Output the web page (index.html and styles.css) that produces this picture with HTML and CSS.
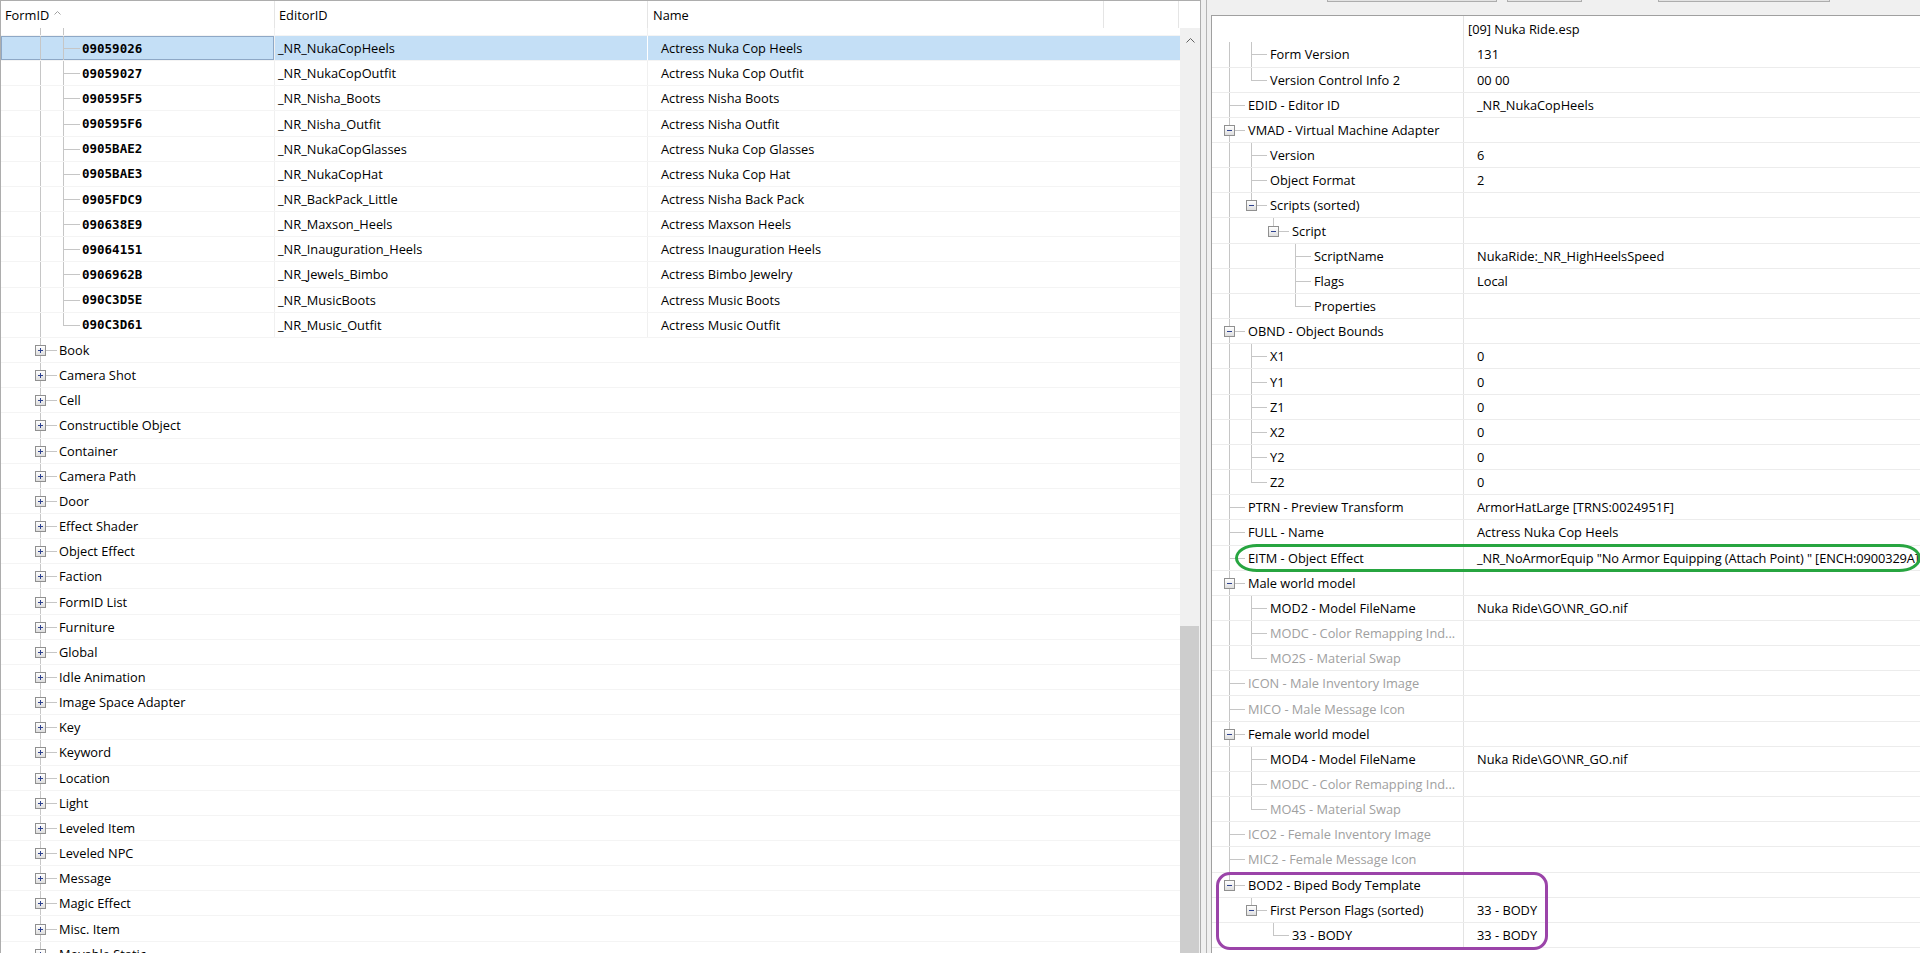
FILE: index.html
```html
<!DOCTYPE html>
<html lang="en">
<head>
  <meta charset="UTF-8" />
  <meta name="viewport" content="width=device-width, initial-scale=1" />
  <title>FO4Edit - Nuka Ride.esp</title>
  <link rel="stylesheet" href="styles.css">
</head>
<body>
<div class="app">

  <!-- record list (left) -->
  <section class="list">
    <div class="list-head">
      <div class="hc c-form">FormID
        <svg class="sort" width="7" height="4" viewBox="0 0 7 4"><polyline points="0.5,3.5 3.5,0.5 6.5,3.5" fill="none" stroke="#a0a0a0"/></svg>
      </div>
      <div class="hc c-edid">EditorID</div>
      <div class="hc c-name">Name</div>
      <div class="hc c-rest"></div>
    </div>
    <div class="list-body">
      <div class="rows">
        <!-- row scrolled half under the header -->
        <div class="row file part">
          <div class="cell c-form"><span class="tree"><i class="g v"></i><i class="g t"></i></span></div>
          <div class="cell c-edid"></div>
          <div class="cell c-name"></div>
        </div>
        <div class="row file sel">
          <div class="cell c-form"><span class="tree"><i class="g v"></i><i class="g t"></i></span><span class="fid">09059026</span></div>
          <div class="cell c-edid">_NR_NukaCopHeels</div>
          <div class="cell c-name">Actress Nuka Cop Heels</div>
        </div>
        <div class="row file">
          <div class="cell c-form"><span class="tree"><i class="g v"></i><i class="g t"></i></span><span class="fid">09059027</span></div>
          <div class="cell c-edid">_NR_NukaCopOutfit</div>
          <div class="cell c-name">Actress Nuka Cop Outfit</div>
        </div>
        <div class="row file">
          <div class="cell c-form"><span class="tree"><i class="g v"></i><i class="g t"></i></span><span class="fid">090595F5</span></div>
          <div class="cell c-edid">_NR_Nisha_Boots</div>
          <div class="cell c-name">Actress Nisha Boots</div>
        </div>
        <div class="row file">
          <div class="cell c-form"><span class="tree"><i class="g v"></i><i class="g t"></i></span><span class="fid">090595F6</span></div>
          <div class="cell c-edid">_NR_Nisha_Outfit</div>
          <div class="cell c-name">Actress Nisha Outfit</div>
        </div>
        <div class="row file">
          <div class="cell c-form"><span class="tree"><i class="g v"></i><i class="g t"></i></span><span class="fid">0905BAE2</span></div>
          <div class="cell c-edid">_NR_NukaCopGlasses</div>
          <div class="cell c-name">Actress Nuka Cop Glasses</div>
        </div>
        <div class="row file">
          <div class="cell c-form"><span class="tree"><i class="g v"></i><i class="g t"></i></span><span class="fid">0905BAE3</span></div>
          <div class="cell c-edid">_NR_NukaCopHat</div>
          <div class="cell c-name">Actress Nuka Cop Hat</div>
        </div>
        <div class="row file">
          <div class="cell c-form"><span class="tree"><i class="g v"></i><i class="g t"></i></span><span class="fid">0905FDC9</span></div>
          <div class="cell c-edid">_NR_BackPack_Little</div>
          <div class="cell c-name">Actress Nisha Back Pack</div>
        </div>
        <div class="row file">
          <div class="cell c-form"><span class="tree"><i class="g v"></i><i class="g t"></i></span><span class="fid">090638E9</span></div>
          <div class="cell c-edid">_NR_Maxson_Heels</div>
          <div class="cell c-name">Actress Maxson Heels</div>
        </div>
        <div class="row file">
          <div class="cell c-form"><span class="tree"><i class="g v"></i><i class="g t"></i></span><span class="fid">09064151</span></div>
          <div class="cell c-edid">_NR_Inauguration_Heels</div>
          <div class="cell c-name">Actress Inauguration Heels</div>
        </div>
        <div class="row file">
          <div class="cell c-form"><span class="tree"><i class="g v"></i><i class="g t"></i></span><span class="fid">0906962B</span></div>
          <div class="cell c-edid">_NR_Jewels_Bimbo</div>
          <div class="cell c-name">Actress Bimbo Jewelry</div>
        </div>
        <div class="row file">
          <div class="cell c-form"><span class="tree"><i class="g v"></i><i class="g t"></i></span><span class="fid">090C3D5E</span></div>
          <div class="cell c-edid">_NR_MusicBoots</div>
          <div class="cell c-name">Actress Music Boots</div>
        </div>
        <div class="row file">
          <div class="cell c-form"><span class="tree"><i class="g v"></i><i class="g l"></i></span><span class="fid">090C3D61</span></div>
          <div class="cell c-edid">_NR_Music_Outfit</div>
          <div class="cell c-name">Actress Music Outfit</div>
        </div>

        <div class="row cat"><span class="tree"><i class="g t"><b class="box plus"></b></i></span><span class="lbl">Book</span></div>
        <div class="row cat"><span class="tree"><i class="g t"><b class="box plus"></b></i></span><span class="lbl">Camera Shot</span></div>
        <div class="row cat"><span class="tree"><i class="g t"><b class="box plus"></b></i></span><span class="lbl">Cell</span></div>
        <div class="row cat"><span class="tree"><i class="g t"><b class="box plus"></b></i></span><span class="lbl">Constructible Object</span></div>
        <div class="row cat"><span class="tree"><i class="g t"><b class="box plus"></b></i></span><span class="lbl">Container</span></div>
        <div class="row cat"><span class="tree"><i class="g t"><b class="box plus"></b></i></span><span class="lbl">Camera Path</span></div>
        <div class="row cat"><span class="tree"><i class="g t"><b class="box plus"></b></i></span><span class="lbl">Door</span></div>
        <div class="row cat"><span class="tree"><i class="g t"><b class="box plus"></b></i></span><span class="lbl">Effect Shader</span></div>
        <div class="row cat"><span class="tree"><i class="g t"><b class="box plus"></b></i></span><span class="lbl">Object Effect</span></div>
        <div class="row cat"><span class="tree"><i class="g t"><b class="box plus"></b></i></span><span class="lbl">Faction</span></div>
        <div class="row cat"><span class="tree"><i class="g t"><b class="box plus"></b></i></span><span class="lbl">FormID List</span></div>
        <div class="row cat"><span class="tree"><i class="g t"><b class="box plus"></b></i></span><span class="lbl">Furniture</span></div>
        <div class="row cat"><span class="tree"><i class="g t"><b class="box plus"></b></i></span><span class="lbl">Global</span></div>
        <div class="row cat"><span class="tree"><i class="g t"><b class="box plus"></b></i></span><span class="lbl">Idle Animation</span></div>
        <div class="row cat"><span class="tree"><i class="g t"><b class="box plus"></b></i></span><span class="lbl">Image Space Adapter</span></div>
        <div class="row cat"><span class="tree"><i class="g t"><b class="box plus"></b></i></span><span class="lbl">Key</span></div>
        <div class="row cat"><span class="tree"><i class="g t"><b class="box plus"></b></i></span><span class="lbl">Keyword</span></div>
        <div class="row cat"><span class="tree"><i class="g t"><b class="box plus"></b></i></span><span class="lbl">Location</span></div>
        <div class="row cat"><span class="tree"><i class="g t"><b class="box plus"></b></i></span><span class="lbl">Light</span></div>
        <div class="row cat"><span class="tree"><i class="g t"><b class="box plus"></b></i></span><span class="lbl">Leveled Item</span></div>
        <div class="row cat"><span class="tree"><i class="g t"><b class="box plus"></b></i></span><span class="lbl">Leveled NPC</span></div>
        <div class="row cat"><span class="tree"><i class="g t"><b class="box plus"></b></i></span><span class="lbl">Message</span></div>
        <div class="row cat"><span class="tree"><i class="g t"><b class="box plus"></b></i></span><span class="lbl">Magic Effect</span></div>
        <div class="row cat"><span class="tree"><i class="g t"><b class="box plus"></b></i></span><span class="lbl">Misc. Item</span></div>
        <div class="row cat"><span class="tree"><i class="g t"><b class="box plus"></b></i></span><span class="lbl">Movable Static</span></div>
      </div>
      <div class="vscroll">
        <div class="vs-up">
          <svg width="9" height="5" viewBox="0 0 9 5"><polyline points="0.5,4.5 4.5,0.5 8.5,4.5" fill="none" stroke="#606060"/></svg>
        </div>
        <div class="vs-track"><div class="vs-thumb"></div></div>
      </div>
    </div>
  </section>

  <div class="split"></div>

  <!-- record view (right) -->
  <section class="side">
    <div class="toolbar">
      <div class="tb-inner">
        <span class="tb-lbl lbl-a">Filter by</span>
        <span class="tb-edit edit-a"></span>
        <span class="tb-edit edit-b"></span>
        <span class="tb-lbl lbl-b">by</span>
        <span class="tb-edit edit-c"></span>
        <span class="tb-btn">Help</span>
      </div>
    </div>

    <div class="view">
      <div class="view-head">
        <div class="vc-name"></div>
        <div class="vc-val">[09] Nuka Ride.esp</div>
      </div>

      <div class="vrow"><div class="vc-name"><span class="tree"><i class="g v"></i><i class="g t"></i></span><span class="lbl">Form Version</span></div><div class="vc-val">131</div></div>
      <div class="vrow"><div class="vc-name"><span class="tree"><i class="g v"></i><i class="g l"></i></span><span class="lbl">Version Control Info 2</span></div><div class="vc-val">00 00</div></div>
      <div class="vrow"><div class="vc-name"><span class="tree"><i class="g t"></i></span><span class="lbl">EDID - Editor ID</span></div><div class="vc-val">_NR_NukaCopHeels</div></div>
      <div class="vrow"><div class="vc-name"><span class="tree"><i class="g t"><b class="box"></b></i></span><span class="lbl">VMAD - Virtual Machine Adapter</span></div><div class="vc-val"></div></div>
      <div class="vrow"><div class="vc-name"><span class="tree"><i class="g v"></i><i class="g t"></i></span><span class="lbl">Version</span></div><div class="vc-val">6</div></div>
      <div class="vrow"><div class="vc-name"><span class="tree"><i class="g v"></i><i class="g t"></i></span><span class="lbl">Object Format</span></div><div class="vc-val">2</div></div>
      <div class="vrow"><div class="vc-name"><span class="tree"><i class="g v"></i><i class="g l"><b class="box"></b></i></span><span class="lbl">Scripts (sorted)</span></div><div class="vc-val"></div></div>
      <div class="vrow"><div class="vc-name"><span class="tree"><i class="g v"></i><i class="g n"></i><i class="g l"><b class="box"></b></i></span><span class="lbl">Script</span></div><div class="vc-val"></div></div>
      <div class="vrow"><div class="vc-name"><span class="tree"><i class="g v"></i><i class="g n"></i><i class="g n"></i><i class="g t"></i></span><span class="lbl">ScriptName</span></div><div class="vc-val">NukaRide:_NR_HighHeelsSpeed</div></div>
      <div class="vrow"><div class="vc-name"><span class="tree"><i class="g v"></i><i class="g n"></i><i class="g n"></i><i class="g t"></i></span><span class="lbl">Flags</span></div><div class="vc-val">Local</div></div>
      <div class="vrow"><div class="vc-name"><span class="tree"><i class="g v"></i><i class="g n"></i><i class="g n"></i><i class="g l"></i></span><span class="lbl">Properties</span></div><div class="vc-val"></div></div>
      <div class="vrow"><div class="vc-name"><span class="tree"><i class="g t"><b class="box"></b></i></span><span class="lbl">OBND - Object Bounds</span></div><div class="vc-val"></div></div>
      <div class="vrow"><div class="vc-name"><span class="tree"><i class="g v"></i><i class="g t"></i></span><span class="lbl">X1</span></div><div class="vc-val">0</div></div>
      <div class="vrow"><div class="vc-name"><span class="tree"><i class="g v"></i><i class="g t"></i></span><span class="lbl">Y1</span></div><div class="vc-val">0</div></div>
      <div class="vrow"><div class="vc-name"><span class="tree"><i class="g v"></i><i class="g t"></i></span><span class="lbl">Z1</span></div><div class="vc-val">0</div></div>
      <div class="vrow"><div class="vc-name"><span class="tree"><i class="g v"></i><i class="g t"></i></span><span class="lbl">X2</span></div><div class="vc-val">0</div></div>
      <div class="vrow"><div class="vc-name"><span class="tree"><i class="g v"></i><i class="g t"></i></span><span class="lbl">Y2</span></div><div class="vc-val">0</div></div>
      <div class="vrow"><div class="vc-name"><span class="tree"><i class="g v"></i><i class="g l"></i></span><span class="lbl">Z2</span></div><div class="vc-val">0</div></div>
      <div class="vrow"><div class="vc-name"><span class="tree"><i class="g t"></i></span><span class="lbl">PTRN - Preview Transform</span></div><div class="vc-val">ArmorHatLarge [TRNS:0024951F]</div></div>
      <div class="vrow"><div class="vc-name"><span class="tree"><i class="g t"></i></span><span class="lbl">FULL - Name</span></div><div class="vc-val">Actress Nuka Cop Heels</div></div>
      <div class="vrow"><div class="vc-name"><span class="tree"><i class="g t"></i></span><span class="lbl">EITM - Object Effect</span></div><div class="vc-val eitm">_NR_NoArmorEquip "No Armor Equipping (Attach Point) " [ENCH:0900329A]</div></div>
      <div class="vrow"><div class="vc-name"><span class="tree"><i class="g t"><b class="box"></b></i></span><span class="lbl">Male world model</span></div><div class="vc-val"></div></div>
      <div class="vrow"><div class="vc-name"><span class="tree"><i class="g v"></i><i class="g t"></i></span><span class="lbl">MOD2 - Model FileName</span></div><div class="vc-val">Nuka Ride\GO\NR_GO.nif</div></div>
      <div class="vrow dim"><div class="vc-name"><span class="tree"><i class="g v"></i><i class="g t"></i></span><span class="lbl">MODC - Color Remapping Ind...</span></div><div class="vc-val"></div></div>
      <div class="vrow dim"><div class="vc-name"><span class="tree"><i class="g v"></i><i class="g l"></i></span><span class="lbl">MO2S - Material Swap</span></div><div class="vc-val"></div></div>
      <div class="vrow dim"><div class="vc-name"><span class="tree"><i class="g t"></i></span><span class="lbl">ICON - Male Inventory Image</span></div><div class="vc-val"></div></div>
      <div class="vrow dim"><div class="vc-name"><span class="tree"><i class="g t"></i></span><span class="lbl">MICO - Male Message Icon</span></div><div class="vc-val"></div></div>
      <div class="vrow"><div class="vc-name"><span class="tree"><i class="g t"><b class="box"></b></i></span><span class="lbl">Female world model</span></div><div class="vc-val"></div></div>
      <div class="vrow"><div class="vc-name"><span class="tree"><i class="g v"></i><i class="g t"></i></span><span class="lbl">MOD4 - Model FileName</span></div><div class="vc-val">Nuka Ride\GO\NR_GO.nif</div></div>
      <div class="vrow dim"><div class="vc-name"><span class="tree"><i class="g v"></i><i class="g t"></i></span><span class="lbl">MODC - Color Remapping Ind...</span></div><div class="vc-val"></div></div>
      <div class="vrow dim"><div class="vc-name"><span class="tree"><i class="g v"></i><i class="g l"></i></span><span class="lbl">MO4S - Material Swap</span></div><div class="vc-val"></div></div>
      <div class="vrow dim"><div class="vc-name"><span class="tree"><i class="g t"></i></span><span class="lbl">ICO2 - Female Inventory Image</span></div><div class="vc-val"></div></div>
      <div class="vrow dim"><div class="vc-name"><span class="tree"><i class="g t"></i></span><span class="lbl">MIC2 - Female Message Icon</span></div><div class="vc-val"></div></div>
      <div class="vrow"><div class="vc-name"><span class="tree"><i class="g l"><b class="box"></b></i></span><span class="lbl">BOD2 - Biped Body Template</span></div><div class="vc-val"></div></div>
      <div class="vrow"><div class="vc-name"><span class="tree"><i class="g n"></i><i class="g l"><b class="box"></b></i></span><span class="lbl">First Person Flags (sorted)</span></div><div class="vc-val">33 - BODY</div></div>
      <div class="vrow"><div class="vc-name"><span class="tree"><i class="g n"></i><i class="g n"></i><i class="g l"></i></span><span class="lbl">33 - BODY</span></div><div class="vc-val">33 - BODY</div></div>

      <!-- hand-drawn highlight marks -->
      <div class="mark mark-eitm"></div>
      <div class="mark mark-bod2"></div>
    </div>
  </section>
</div>
</body>
</html>
```

FILE: styles.css
```css
body {
  margin: 0;
  font-family: 'Segoe UI', 'Open Sans', sans-serif;
  font-size: 12.8px;
  color: #000;
  background: #f0f0f0;
  overflow: hidden;
}
.app {
  display: flex;
  height: 953px;
}

/* ---- left list ---- */
.list {
  width: 1201px;
  flex: none;
  display: flex;
  flex-direction: column;
  background: #fff;
  border: 1px solid #adadad;
  border-bottom: 0;
  box-sizing: border-box;
  --step: 23px;
  --arm: 17px;
}
.list-head {
  display: flex;
  height: 27px;
  flex: none;
  position: relative;
  z-index: 2;
  background: #fff;
}
.hc {
  display: flex;
  align-items: center;
  gap: 5px;
  box-sizing: border-box;
  border-right: 1px solid #e5e5e5;
  padding: 1px 0 0 4px;
  white-space: nowrap;
}
.sort { margin-top: -4px; }
.c-form { width: 274px; flex: none; }
.c-edid { width: 373px; flex: none; }
.c-name { width: 456px; flex: none; }
.hc.c-name { padding-left: 5px; }
.c-rest { width: 75px; flex: none; }

.list-body {
  flex: 1;
  display: flex;
  min-height: 0;
}
.rows {
  flex: 1;
  overflow: hidden;
}
.row {
  display: flex;
  height: 25.16px;
  box-sizing: border-box;
  border-bottom: 1px solid #f4f4f4;
  white-space: nowrap;
}
.row.part { margin-top: -17.16px; }
.cell {
  display: flex;
  align-items: center;
  box-sizing: border-box;
  height: 100%;
  overflow: hidden;
}
.row.file .c-form,
.row.file .c-edid { border-right: 1px solid #f0f0f0; }
.row.file .c-edid { padding-left: 3px; }
.row.file .c-name { padding-left: 13px; flex: 1; width: auto; }
.row.sel .cell { background: #c4dff6; }
.row.sel .c-form { box-shadow: inset 0 0 0 1px #8ea8c6; }
.row.sel .c-edid { border-right-color: #fff; }

.list .tree { padding-left: 28px; }
.fid {
  font-family: 'DejaVu Sans Mono', monospace;
  font-weight: bold;
  font-size: 12.5px;
  margin-left: 7px;
}
.row.cat { align-items: center; }
.list .lbl { margin-left: 7px; }

/* tree guides */
.tree {
  display: flex;
  align-self: stretch;
  height: 100%;
  flex: none;
}
.g {
  width: var(--step);
  flex: none;
  position: relative;
}
.g.v::before,
.g.t::before,
.g.l::before {
  content: "";
  position: absolute;
  left: 11px;
  top: 0;
  bottom: 0;
  width: 1px;
  background: #c6c6c6;
}
.g.l::before { bottom: 50%; }
.g.t::after,
.g.l::after {
  content: "";
  position: absolute;
  left: 11px;
  top: 50%;
  width: var(--arm);
  height: 1px;
  background: #c6c6c6;
}
.box {
  position: absolute;
  left: 6px;
  top: 50%;
  margin-top: -5px;
  width: 9px;
  height: 9px;
  border: 1px solid #909090;
  background: linear-gradient(#ffffff, #dedede);
  z-index: 1;
}
.box::before {
  content: "";
  position: absolute;
  left: 2px;
  top: 4px;
  width: 5px;
  height: 1px;
  background: #2e428f;
}
.box.plus::after {
  content: "";
  position: absolute;
  left: 4px;
  top: 2px;
  width: 1px;
  height: 5px;
  background: #2e428f;
}

/* scrollbar */
.vscroll {
  width: 20px;
  flex: none;
  display: flex;
  flex-direction: column;
  background: #f0f0f0;
}
.vs-up {
  height: 24px;
  display: flex;
  align-items: center;
  justify-content: center;
  flex: none;
}
.vs-track {
  flex: 1;
  display: flex;
  flex-direction: column;
  justify-content: flex-end;
}
.vs-thumb {
  height: 327px;
  margin: 0 1px 0 0;
  background: #cdcdcd;
}

/* splitter */
.split {
  width: 10px;
  flex: none;
  background: linear-gradient(to right, #f0f0f0 5px, #b4b4b4 5px, #b4b4b4 6px, #f0f0f0 6px);
}

/* ---- right side ---- */
.side {
  flex: 1;
  display: flex;
  flex-direction: column;
  min-width: 0;
}
.toolbar {
  height: 15px;
  flex: none;
  overflow: hidden;
}
.tb-inner {
  display: flex;
  align-items: flex-end;
  height: 22px;
  margin-top: -20px;
}
.tb-lbl, .tb-btn {
  line-height: 18px;
  margin-bottom: 2px;
  white-space: nowrap;
}
.lbl-a { width: 59px; text-align: right; }
.lbl-b { width: 26px; text-align: right; }
.tb-edit {
  height: 20px;
  box-sizing: border-box;
  background: #e3e3e3;
  border: 1px solid #adadad;
}
.edit-a { width: 170px; margin-left: 57px; }
.edit-b { width: 75px; margin-left: 10px; }
.edit-c { width: 172px; margin-left: 50px; }
.tb-btn { margin-left: 18px; }

.view {
  flex: 1;
  position: relative;
  overflow: hidden;
  background: #fff;
  border-left: 1px solid #a0a0a0;
  border-top: 1px solid #a0a0a0;
  --step: 22px;
  --arm: 16px;
}
.view-head {
  display: flex;
  height: 26.4px;
}
.vrow {
  display: flex;
  height: 25.17px;
  box-sizing: border-box;
  border-bottom: 1px solid #ececec;
  white-space: nowrap;
}
.vc-name {
  width: 252px;
  flex: none;
  display: flex;
  align-items: center;
  box-sizing: border-box;
  border-right: 1px solid #e3e3e3;
  padding-left: 6px;
  overflow: hidden;
}
.vc-val {
  flex: 1;
  display: flex;
  align-items: center;
  padding-left: 13px;
}
.vc-val.eitm { letter-spacing: -0.1px; }
.view-head .vc-val { padding-left: 4px; }
.view .lbl { margin-left: 8px; }
.vrow.dim .lbl { color: #a0a0a0; }

/* highlight marks drawn over the record view */
.mark {
  position: absolute;
  box-sizing: border-box;
  pointer-events: none;
}
.mark-eitm {
  left: 23px;
  top: 528px;
  width: 686px;
  height: 28px;
  border: 3px solid #27a540;
  border-radius: 22px / 14px;
}
.mark-bod2 {
  left: 4px;
  top: 856px;
  width: 332px;
  height: 78px;
  border: 3px solid #9b44a9;
  border-radius: 14px;
}
```
